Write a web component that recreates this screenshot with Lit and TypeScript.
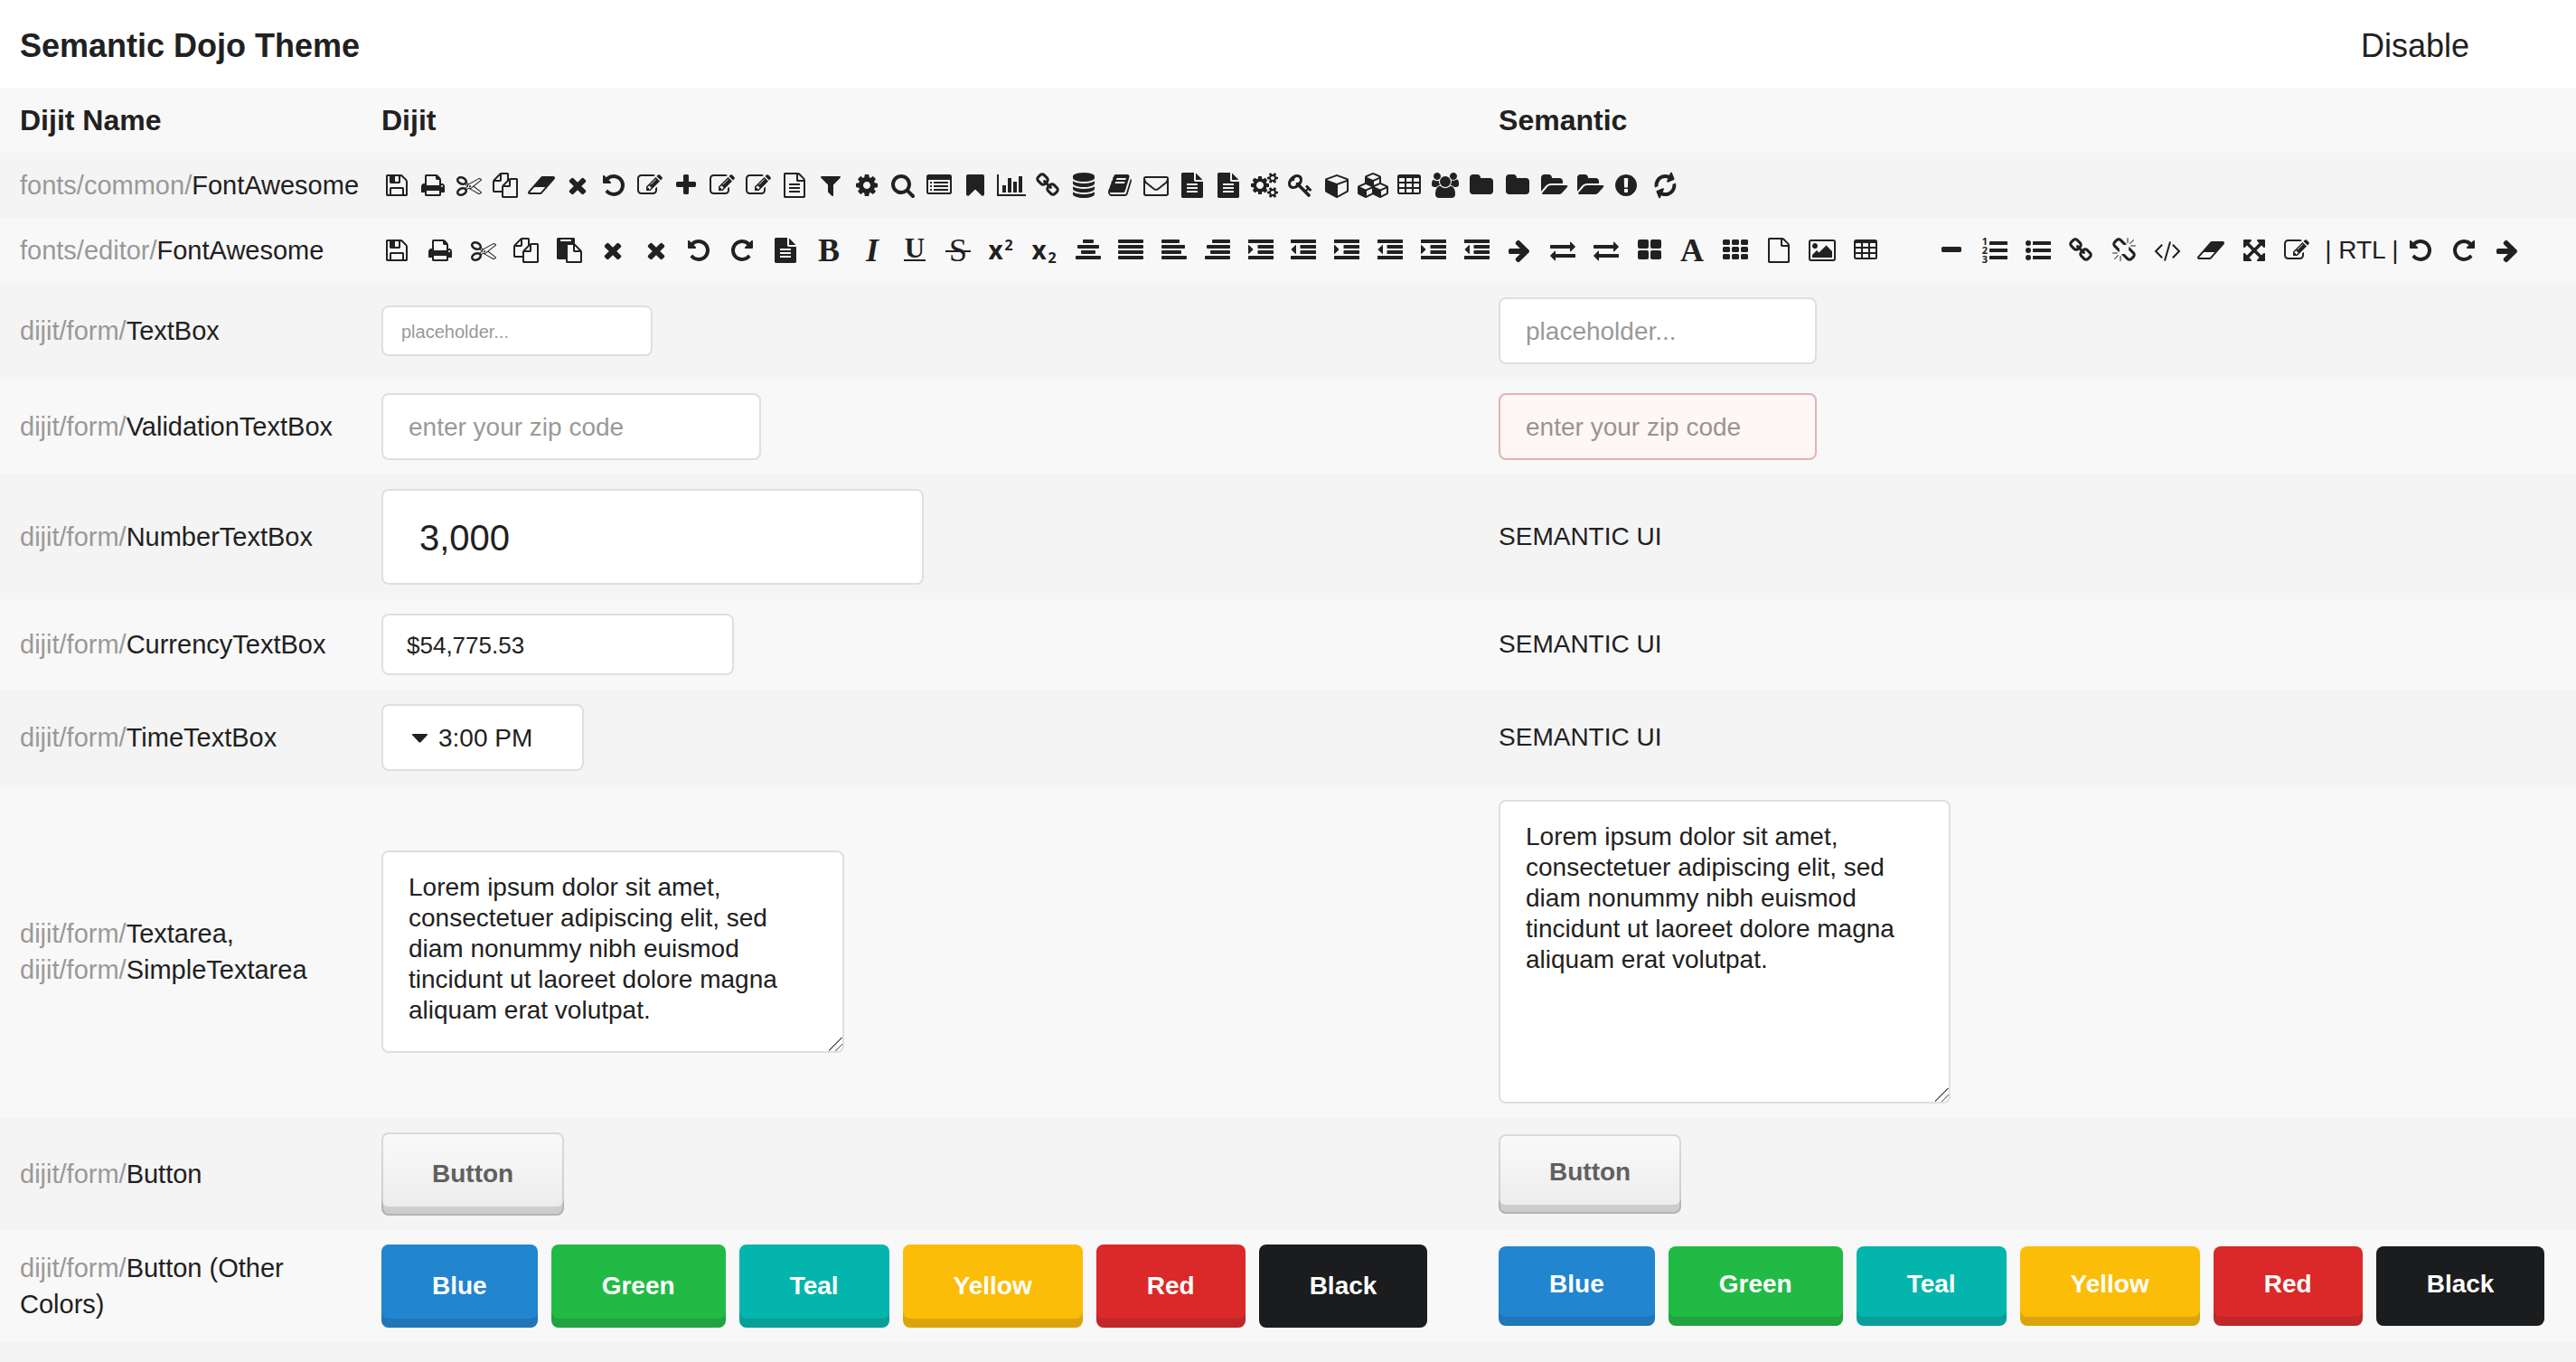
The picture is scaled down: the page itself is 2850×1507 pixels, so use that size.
import { LitElement, html, css, svg } from "lit";
import type { SVGTemplateResult, TemplateResult } from "lit";
import { customElement, property } from "lit/decorators.js";

/* Glyphs are drawn on a 1792-unit em square; wider glyphs carry their own width. */
interface Glyph {
  w?: number;
  body: SVGTemplateResult;
}

const EM = 1792;

const p = (d: string, w?: number): Glyph => ({ w, body: svg`<path fill-rule="evenodd" d=${d}></path>` });

/* Rounded rectangle as a path segment. */
const rr = (x: number, y: number, w: number, h: number, r: number): string =>
  `M${x + r} ${y}h${w - 2 * r}q${r} 0 ${r} ${r}v${h - 2 * r}q0 ${r} ${-r} ${r}h${2 * r - w}q${-r} 0 ${-r} ${-r}v${2 * r - h}q0 ${-r} ${r} ${-r}z`;

const circle = (cx: number, cy: number, r: number): string =>
  `M${cx - r} ${cy}a${r} ${r} 0 1 0 ${2 * r} 0a${r} ${r} 0 1 0 ${-2 * r} 0z`;

const lines = (spans: [number, number][], r = 64): string =>
  spans.map(([x, w], i) => rr(x, 128 + i * 384, w, 256, r)).join("");

const grid = (xs: number[], ys: number[], w: number, h: number, r: number): string =>
  ys.map((y) => xs.map((x) => rr(x, y, w, h, r)).join("")).join("");

const FILE_FRAME =
  "M1596 380q28 28 48 76t20 88v1152q0 40-28 68t-68 28h-1344q-40 0-68-28t-28-68v-1600q0-40 28-68t68-28h896q40 0 88 20t76 48zm-444-244v376h376q-10-29-22-41l-313-313q-12-12-41-22zm384 1528v-1024h-416q-40 0-68-28t-28-68v-416h-768v1536h1280z";

const DENT_LINES = rr(0, 128, 1792, 256, 32) + rr(672, 512, 1120, 256, 32) + rr(672, 896, 1120, 256, 32) + rr(0, 1280, 1792, 256, 32);
const LIST_LINES = rr(512, 256, 1280, 256, 32) + rr(512, 768, 1280, 256, 32) + rr(512, 1280, 1280, 256, 32);

const GLYPHS: Record<string, Glyph> = {
  save: p("M512 1536h768v-384h-768v384zm896 0h128v-896q0-14-10-38.5t-20-34.5l-281-281q-10-10-34-20t-39-10v416q0 40-28 68t-68 28h-576q-40 0-68-28t-28-68v-416h-128v1280h128v-416q0-40 28-68t68-28h832q40 0 68 28t28 68v416zm-384-928v-320q0-13-9.5-22.5t-22.5-9.5h-192q-13 0-22.5 9.5t-9.5 22.5v320q0 13 9.5 22.5t22.5 9.5h192q13 0 22.5-9.5t9.5-22.5zm640 32v928q0 40-28 68t-68 28h-1344q-40 0-68-28t-28-68v-1344q0-40 28-68t68-28h928q40 0 88 20t76 48l280 280q28 28 48 76t20 88z"),
  print: p("M448 1536h896v-256h-896v256zm0-640h896v-384h-160q-40 0-68-28t-28-68v-160h-640v640zm1152 64q0-26-19-45t-45-19-45 19-19 45 19 45 45 19 45-19 19-45zm128 0v416q0 13-9.5 22.5t-22.5 9.5h-224v160q0 40-28 68t-68 28h-960q-40 0-68-28t-28-68v-160h-224q-13 0-22.5-9.5t-9.5-22.5v-416q0-79 56.5-135.5t135.5-56.5h64v-544q0-40 28-68t68-28h672q40 0 88 20t76 48l152 152q28 28 48 76t20 88v256h64q79 0 135.5 56.5t56.5 135.5z"),
  cut: p("M960 896q26 0 45 19t19 45-19 45-45 19-45-19-19-45 19-45 45-19zm300 64l507 398q28 20 25 56-5 35-35 51l-128 64q-13 7-29 7-17 0-31-8l-690-387-110 66q-8 4-12 5 14 49 10 97-7 77-56 147.5t-132 123.5q-132 84-277 84-136 0-222-78-90-84-79-207 7-76 56-147t131-124q132-84 278-84 83 0 151 31 9-13 22-22l122-73-122-73q-13-9-22-22-68 31-151 31-146 0-278-84-82-53-131-124t-56-147q-5-59 15.5-113t63.5-93q85-79 222-79 145 0 277 84 83 52 132 123t56 148q4 48-10 97 4 1 12 5l110 66 690-387q14-8 31-8 16 0 29 7l128 64q30 16 35 51 3 36-25 56zm-681-260q46-42 21-108t-106-117q-92-59-192-59-74 0-113 36-46 42-21 108t106 117q92 59 192 59 74 0 113-36zm-85 745q81-51 106-117t-21-108q-39-36-113-36-100 0-192 59-81 51-106 117t21 108q39 36 113 36 100 0 192-59zm178-613l96 58v-11q0-36 33-56l14-8-79-47-26 26q-3 3-10 11t-12 12q-2 2-4 3.5t-3 2.5zm224 224l96 32 736-576-128-64-768 431v113l-160 96 9 8q2 2 7 6 4 4 11 12t11 12l26 26zm704 416l128-64-520-408-177 138q-2 3-13 7z"),
  copy: p("M1696 384q40 0 68 28t28 68v1216q0 40-28 68t-68 28h-960q-40 0-68-28t-28-68v-288h-544q-40 0-68-28t-28-68v-672q0-40 20-88t48-76l408-408q28-28 76-48t88-20h416q40 0 68 28t28 68v328q68-40 128-40h416zm-544 213l-299 299h299v-299zm-640-384l-299 299h299v-299zm196 647l316-316v-416h-384v416q0 40-28 68t-68 28h-416v640h512v-256q0-40 20-88t48-76zm956 804v-1152h-384v416q0 40-28 68t-68 28h-416v640h896z"),
  paste: p("M768 1664h896v-640h-416q-40 0-68-28t-28-68v-416h-384v1152zm256-1440v-64q0-13-9.5-22.5t-22.5-9.5h-704q-13 0-22.5 9.5t-9.5 22.5v64q0 13 9.5 22.5t22.5 9.5h704q13 0 22.5-9.5t9.5-22.5zm256 672h299l-299-299v299zm512 128v672q0 40-28 68t-68 28h-960q-40 0-68-28t-28-68v-160h-544q-40 0-68-28t-28-68v-1344q0-40 28-68t68-28h1088q40 0 68 28t28 68v328q21 13 36 28l408 408q28 28 48 76t20 88z"),
  eraser: p("M832 1408l336-384h-768l-336 384h768zm1013-1077q15 34 9.5 71.5t-30.5 65.5l-896 1024q-38 44-96 44h-768q-38 0-69.5-20.5t-47.5-54.5q-15-34-9.5-71.5t30.5-65.5l896-1024q38-44 96-44h768q38 0 69.5 20.5t47.5 54.5z", 1792),
  times: p("M1490 1322q0 40-28 68l-136 136q-28 28-68 28t-68-28l-294-294-294 294q-28 28-68 28t-68-28l-136-136q-28-28-28-68t28-68l294-294-294-294q-28-28-28-68t28-68l136-136q28-28 68-28t68 28l294 294 294-294q28-28 68-28t68 28l136 136q28 28 28 68t-28 68l-294 294 294 294q28 28 28 68z"),
  undo: p("M1664 896q0 156-61 298t-164 245-245 164-298 61q-172 0-327-72.5t-264-204.5q-7-10-6.5-22.5t8.5-20.5l137-138q10-9 25-9 16 2 23 12 73 95 179 147t225 52q104 0 198.5-40.5t163.5-109.5 109.5-163.5 40.5-198.5-40.5-198.5-109.5-163.5-163.5-109.5-198.5-40.5q-98 0-188 35.5t-160 101.5l137 138q31 30 14 69-17 40-59 40h-448q-26 0-45-19t-19-45v-448q0-42 40-59 39-17 69 14l130 129q107-101 244.5-156.5t284.5-55.5q156 0 298 61t245 164 164 245 61 298z"),
  redo: p("M1664 256v448q0 26-19 45t-45 19h-448q-42 0-59-40-17-39 14-69l138-138q-148-137-349-137-104 0-198.5 40.5t-163.5 109.5-109.5 163.5-40.5 198.5 40.5 198.5 109.5 163.5 163.5 109.5 198.5 40.5q119 0 225-52t179-147q7-10 23-12 15 0 25 9l137 138q9 8 9.5 20.5t-7.5 22.5q-109 132-264 204.5t-327 72.5q-156 0-298-61t-245-164-164-245-61-298 61-298 164-245 245-164 298-61q147 0 284.5 55.5t244.5 156.5l130-129q29-31 70-14 39 17 39 59z"),
  edit: p("M888 1184l116-116-152-152-116 116v56h96v96h56zm440-720q-16-16-33 1l-350 350q-17 17-1 33t33-1l350-350q17-17 1-33zm80 594v190q0 119-84.5 203.5t-203.5 84.5h-832q-119 0-203.5-84.5t-84.5-203.5v-832q0-119 84.5-203.5t203.5-84.5h832q63 0 117 25 15 7 18 23 3 17-9 29l-49 49q-14 14-32 8-23-6-45-6h-832q-66 0-113 47t-47 113v832q0 66 47 113t113 47h832q66 0 113-47t47-113v-126q0-13 9-22l64-64q15-15 35-7t20 29zm-96-738l288 288-672 672h-288v-288zm444 132l-92 92-288-288 92-92q28-28 68-28t68 28l152 152q28 28 28 68t-28 68z"),
  plus: p("M1600 736v192q0 40-28 68t-68 28h-416v416q0 40-28 68t-68 28h-192q-40 0-68-28t-28-68v-416h-416q-40 0-68-28t-28-68v-192q0-40 28-68t68-28h416v-416q0-40 28-68t68-28h192q40 0 68 28t28 68v416h416q40 0 68 28t28 68z"),
  minus: p("M1600 736v192q0 40-28 68t-68 28h-1216q-40 0-68-28t-28-68v-192q0-40 28-68t68-28h1216q40 0 68 28t28 68z"),
  fileOutline: p(FILE_FRAME),
  fileTextOutline: p(FILE_FRAME + rr(512, 768, 768, 128, 32) + rr(512, 1024, 768, 128, 32) + rr(512, 1280, 768, 128, 32)),
  fileText: p("M1596 476q14 14 28 36h-472v-472q22 14 36 28zm-476 164h544v1056q0 40-28 68t-68 28h-1344q-40 0-68-28t-28-68v-1600q0-40 28-68t68-28h800v544q0 40 28 68t68 28z" + rr(512, 768, 768, 128, 32) + rr(512, 1024, 768, 128, 32) + rr(512, 1280, 768, 128, 32)),
  filter: p("M1595 295q17 41-14 70l-493 493v742q0 42-39 59-13 5-25 5-27 0-45-19l-256-256q-19-19-19-45v-486l-493-493q-31-29-14-70 17-39 59-39h1280q42 0 59 39z"),
  cog: p("M1152 896q0-106-75-181t-181-75-181 75-75 181 75 181 181 75 181-75 75-181zm512-109v222q0 12-8 23t-20 13l-185 28q-19 54-39 91 35 50 107 138 10 12 10 25t-9 23q-27 37-99 108t-94 71q-12 0-26-9l-138-108q-44 23-91 38-16 136-29 186-7 28-36 28h-222q-14 0-24.5-8.5t-11.5-21.5l-28-184q-49-16-90-37l-141 107q-10 9-25 9-14 0-25-11-126-114-165-168-7-10-7-23 0-12 8-23 15-21 51-66.5t54-70.5q-27-50-41-99l-183-27q-13-2-21-12.5t-8-23.5v-222q0-12 8-23t19-13l186-28q14-46 39-92-40-57-107-138-10-12-10-24 0-10 9-23 26-36 98.5-107.5t94.5-71.5q13 0 26 10l138 107q44-23 91-38 16-136 29-186 7-28 36-28h222q14 0 24.5 8.5t11.5 21.5l28 184q49 16 90 37l142-107q9-9 24-9 13 0 25 10 129 119 165 170 7 8 7 22 0 12-8 23-15 21-51 66.5t-54 70.5q26 50 41 98l183 28q13 2 21 12.5t8 23.5z"),
  search: p("M1216 832q0-185-131.5-316.5t-316.5-131.5-316.5 131.5-131.5 316.5 131.5 316.5 316.5 131.5 316.5-131.5 131.5-316.5zm512 832q0 52-38 90t-90 38q-54 0-90-38l-343-342q-179 124-399 124-143 0-273.5-55.5t-225-150-150-225-55.5-273.5 55.5-273.5 150-225 225-150 273.5-55.5 273.5 55.5 225 150 150 225 55.5 273.5q0 220-124 399l343 343q37 37 37 90z"),
  listAlt: p(
    rr(0, 128, 1792, 1408, 160) + rr(128, 512, 1536, 896, 32) +
      grid([256], [640, 896, 1152], 128, 128, 32) + grid([512], [640, 896, 1152], 1024, 128, 32),
  ),
  bookmark: p("M1420 128q23 0 44 9 33 13 52.5 41t19.5 62v1289q0 34-19.5 62t-52.5 41q-19 8-44 8-48 0-83-32l-441-424-441 424q-36 33-83 33-23 0-44-9-33-13-52.5-41t-19.5-62v-1289q0-34 19.5-62t52.5-41q21-9 44-9h1048z"),
  chart: p("M640 896v512h-256v-512h256zm384-512v1024h-256v-1024h256zm1024 1152v128h-2048v-1536h128v1408h1920zm-640-896v768h-256v-768h256zm384-384v1152h-256v-1152h256z", 2048),
  link: p("M1520 1216q0-40-28-68l-208-208q-28-28-68-28-42 0-72 32 3 3 19 18.5t21.5 21.5 15 19 13 25.5 3.5 27.5q0 40-28 68t-68 28q-15 0-27.5-3.5t-25.5-13-19-15-21.5-21.5-18.5-19q-33 31-33 73 0 40 28 68l206 207q27 27 68 27 40 0 68-26l147-146q28-28 28-67zm-703-705q0-40-28-68l-206-207q-28-28-68-28-39 0-68 27l-147 146q-28 28-28 67 0 40 28 68l208 208q27 27 68 27 42 0 72-31-3-3-19-18.5t-21.5-21.5-15-19-13-25.5-3.5-27.5q0-40 28-68t68-28q15 0 27.5 3.5t25.5 13 19 15 21.5 21.5 18.5 19q33-31 33-73zm895 705q0 120-85 203l-147 146q-83 83-203 83-121 0-204-85l-206-207q-83-83-83-203 0-123 88-209l-88-88q-86 88-208 88-120 0-204-84l-208-208q-84-84-84-204t85-203l147-146q83-83 203-83 121 0 204 85l206 207q83 83 83 203 0 123-88 209l88 88q86-88 208-88 120 0 204 84l208 208q84 84 84 204z"),
  unlink: p("M503 1271l-256 256q-10 9-23 9-12 0-23-9-9-10-9-23t9-23l256-256q10-9 23-9t23 9q9 10 9 23t-9 23zm169 41v320q0 14-9 23t-23 9-23-9-9-23v-320q0-14 9-23t23-9 23 9 9 23zm-224-224q0 14-9 23t-23 9h-320q-14 0-23-9t-9-23 9-23 23-9h320q14 0 23 9t9 23zm1264 128q0 120-85 203l-147 146q-83 83-203 83-121 0-204-85l-334-335q-21-21-42-56l239-18 273 274q28 28 68 27.5t68-27.5l147-146q28-28 28-67 0-40-28-68l-274-275 18-239q35 21 56 42l336 336q84 86 84 204zm-617-724l-239 18-273-274q-28-28-68-28-39 0-68 27l-147 146q-28 28-28 67 0 40 28 68l274 274-18 240q-35-21-56-42l-336-336q-84-86-84-204 0-120 85-203l147-146q83-83 203-83 121 0 204 85l334 335q21 21 42 56zm633 84q0 14-9 23t-23 9h-320q-14 0-23-9t-9-23 9-23 23-9h320q14 0 23 9t9 23zm-544-544v320q0 14-9 23t-23 9-23-9-9-23v-320q0-14 9-23t23-9 23 9 9 23zm407 151l-256 256q-11 9-23 9t-23-9q-9-10-9-23t9-23l256-256q10-9 23-9t23 9q9 10 9 23t-9 23z"),
  database: p("M896 768q237 0 443-43t325-127v170q0 69-103 128t-280 93.5-385 34.5-385-34.5-280-93.5-103-128v-170q119 84 325 127t443 43zm0 768q237 0 443-43t325-127v170q0 69-103 128t-280 93.5-385 34.5-385-34.5-280-93.5-103-128v-170q119 84 325 127t443 43zm0-384q237 0 443-43t325-127v170q0 69-103 128t-280 93.5-385 34.5-385-34.5-280-93.5-103-128v-170q119 84 325 127t443 43zm0-1152q208 0 385 34.5t280 93.5 103 128v128q0 69-103 128t-280 93.5-385 34.5-385-34.5-280-93.5-103-128v-128q0-69 103-128t280-93.5 385-34.5z"),
  book: p("M1703 478q40 57 18 129l-275 906q-19 64-76.5 107.5t-122.5 43.5h-923q-77 0-148.5-53.5t-99.5-131.5q-24-67-2-127 0-4 3-27t4-37q1-8-3-21.5t-3-19.5q2-11 8-21t16.5-23.5 16.5-23.5q23-38 45-91.5t30-91.5q3-10 .5-30t-.5-28q3-11 17-28t17-23q21-36 42-92t25-90q1-9-2.5-32t.5-28q4-13 22-30.5t22-22.5q19-26 42.5-84.5t27.5-96.5q1-8-3-25.5t-2-26.5q2-8 9-18t18-23 17-21q8-12 16.5-30.5t15-35 16-36 19.5-32 26.5-23.5 36-11.5 47.5 5.5l-1 3q38-9 51-9h761q74 0 114 56t18 130l-274 906q-36 119-71.5 153.5t-128.5 34.5h-869q-27 0-38 15-11 16-1 43 24 70 144 70h923q29 0 56-15.5t35-41.5l300-987q7-22 5-57 38 15 59 43zm-1064 2q-4 13 2 22.5t20 9.5h608q13 0 25.5-9.5t16.5-22.5l21-64q4-13-2-22.5t-20-9.5h-608q-13 0-25.5 9.5t-16.5 22.5zm-83 256q-4 13 2 22.5t20 9.5h608q13 0 25.5-9.5t16.5-22.5l21-64q4-13-2-22.5t-20-9.5h-608q-13 0-25.5 9.5t-16.5 22.5z"),
  envelope: p("M1664 1504v-768q-32 36-69 66-268 206-426 338-51 43-83 67t-86.5 48.5-102.5 24.5h-2q-48 0-102.5-24.5t-86.5-48.5-83-67q-158-132-426-338-37-30-69-66v768q0 13 9.5 22.5t22.5 9.5h1472q13 0 22.5-9.5t9.5-22.5zm0-1051v-24.5l-.5-13-3-12.5-5.5-9-9-7.5-14-2.5h-1472q-13 0-22.5 9.5t-9.5 22.5q0 168 147 284 193 152 401 317 6 5 35 29.5t46 37.5 44.5 31.5 50.5 27.5 43 9h2q20 0 43-9t50.5-27.5 44.5-31.5 46-37.5 35-29.5q208-165 401-317 54-43 100.5-115.5t46.5-131.5zm128-37v1088q0 66-47 113t-113 47h-1472q-66 0-113-47t-47-113v-1088q0-66 47-113t113-47h1472q66 0 113 47t47 113z"),
  cogs: p("M832 896q0-106-75-181t-181-75-181 75-75 181 75 181 181 75 181-75 75-181zm768 512q0-52-38-90t-90-38-90 38-38 90q0 53 37.5 90.5t90.5 37.5 90.5-37.5 37.5-90.5zm0-1024q0-52-38-90t-90-38-90 38-38 90q0 53 37.5 90.5t90.5 37.5 90.5-37.5 37.5-90.5zm-384 421v185q0 10-7 19.5t-16 10.5l-155 24q-11 35-32 76 34 48 90 115 7 11 7 20 0 12-7 19-23 30-82.5 89.5t-78.5 59.5q-11 0-21-7l-115-90q-37 19-77 31-11 108-23 155-7 24-30 24h-186q-11 0-20-7.5t-10-17.5l-23-153q-34-10-75-31l-118 89q-7 7-20 7-11 0-21-8-144-133-144-160 0-9 7-19 10-14 41-53t47-61q-23-44-35-82l-152-24q-10-1-17-9.5t-7-19.5v-185q0-10 7-19.5t16-10.5l155-24q11-35 32-76-34-48-90-115-7-11-7-20 0-12 7-20 22-30 82-89t79-59q11 0 21 7l115 90q34-18 77-32 11-108 23-154 7-24 30-24h186q11 0 20 7.5t10 17.5l23 153q34 10 75 31l118-89q8-7 20-7 11 0 21 8 144 133 144 160 0 8-7 19-12 16-42 54t-45 60q23 48 34 82l152 23q10 2 17 10.5t7 19.5zm640 533v140q0 16-149 31-12 27-30 52 51 113 51 138 0 4-4 7-122 71-124 71-8 0-46-47t-52-68q-20 2-30 2t-30-2q-14 21-52 68t-46 47q-2 0-124-71-4-3-4-7 0-25 51-138-18-25-30-52-149-15-149-31v-140q0-16 149-31 13-29 30-52-51-113-51-138 0-4 4-7 4-2 35-20t59-34 30-16q8 0 46 46.5t52 67.5q20-2 30-2t30 2q51-71 92-112l6-2q4 0 124 70 4 3 4 7 0 25-51 138 17 23 30 52 149 15 149 31zm0-1024v140q0 16-149 31-12 27-30 52 51 113 51 138 0 4-4 7-122 71-124 71-8 0-46-47t-52-68q-20 2-30 2t-30-2q-14 21-52 68t-46 47q-2 0-124-71-4-3-4-7 0-25 51-138-18-25-30-52-149-15-149-31v-140q0-16 149-31 13-29 30-52-51-113-51-138 0-4 4-7 4-2 35-20t59-34 30-16q8 0 46 46.5t52 67.5q20-2 30-2t30 2q51-71 92-112l6-2q4 0 124 70 4 3 4 7 0 25-51 138 17 23 30 52 149 15 149 31z", 1856),
  key: p("M832 512q0-80-56-136t-136-56-136 56-56 136q0 42 19 83-41-19-83-19-80 0-136 56t-56 136 56 136 136 56 136-56 56-136q0-42-19-83 41 19 83 19 80 0 136-56t56-136zm851 704q0 17-49 66t-66 49q-9 0-28.5-16t-36.5-33-38.5-40-24.5-26l-96 96 220 220q28 28 28 68 0 42-39 81t-81 39q-40 0-68-28l-671-671q-176 131-365 131-163 0-265.5-102.5t-102.5-265.5q0-160 95-313t248-248 313-95q163 0 265.5 102.5t102.5 265.5q0 189-131 365l355 355 96-96q-3-3-26-24.5t-40-38.5-33-36.5-16-28.5q0-17 49-66t66-49q13 0 23 10 6 6 46 44.5t82 79.5 86.5 86 73 78 28.5 41z"),
  cube: p("M896 1629l640-349v-636l-640 233v752zm-64-865l698-254-698-254-698 254zm832-252v768q0 35-18 65t-49 47l-704 384q-28 16-61 16t-61-16l-704-384q-31-17-49-47t-18-65v-768q0-40 23-73t61-47l704-256q22-8 44-8t44 8l704 256q38 14 61 47t23 73z", 1664),
  cubes: p("M640 1632l384-192v-314l-384 164v342zm-64-454l404-173-404-173-404 173zm1088 454l384-192v-314l-384 164v342zm-64-454l404-173-404-173-404 173zm-448-293l384-165v-266l-384 164v267zm-64-379l441-189-441-189-441 189zm1088 518v416q0 36-19 67t-52 47l-448 224q-25 14-57 14t-57-14l-448-224q-4-2-7-4-2 2-7 4l-448 224q-25 14-57 14t-57-14l-448-224q-33-16-52-47t-19-67v-416q0-38 21.5-70t56.5-48l434-186v-400q0-38 21.5-70t56.5-48l448-192q23-10 50-10t50 10l448 192q35 16 56.5 48t21.5 70v400l434 186q36 16 57 48t21 70z", 2176),
  table: p(rr(64, 128, 1664, 1408, 160) + grid([192, 704, 1216], [384, 768, 1152], 384, 256, 32)),
  users: p("M593 896q-162 5-265 128h-134q-82 0-138-40.5t-56-118.5q0-353 124-353 6 0 43.5 21t97.5 42.5 119 21.5q67 0 133-23-5 37-5 66 0 159 81 288zm1071 637q0 120-73 189.5t-194 69.5h-874q-121 0-194-69.5t-73-189.5q0-53 3.5-103.5t14-109 26.5-108.5 43-97.5 62-81 85.5-53.5 111.5-20q10 0 43 21.5t73 48 107 48 135 21.5 135-21.5 107-48 73-48 43-21.5q61 0 111.5 20t85.5 53.5 62 81 43 97.5 26.5 108.5 14 109 3.5 103.5zm-1024-1277q0 106-75 181t-181 75-181-75-75-181 75-181 181-75 181 75 75 181zm704 384q0 159-112.5 271.5t-271.5 112.5-271.5-112.5-112.5-271.5 112.5-271.5 271.5-112.5 271.5 112.5 112.5 271.5zm576 225q0 78-56 118.5t-138 40.5h-134q-103-123-265-128 81-129 81-288 0-29-5-66 66 23 133 23 59 0 119-21.5t97.5-42.5 43.5-21q124 0 124 353zm-128-609q0 106-75 181t-181 75-181-75-75-181 75-181 181-75 181 75 75 181z", 1920),
  folder: p("M1728 608v704q0 92-66 158t-158 66h-1216q-92 0-158-66t-66-158v-960q0-92 66-158t158-66h320q92 0 158 66t66 158v32h672q92 0 158 66t66 158z"),
  folderOpen: p("M1879 952q0 31-31 66l-336 396q-43 51-120.5 86.5t-143.5 35.5h-1088q-34 0-60.5-13t-26.5-43q0-31 31-66l336-396q43-51 120.5-86.5t143.5-35.5h1088q34 0 60.5 13t26.5 43zm-343-344v160h-832q-94 0-197 47.5t-164 119.5l-337 396-5 6q0-4-.5-12.5t-.5-12.5v-960q0-92 66-158t158-66h320q92 0 158 66t66 158v32h544q92 0 158 66t66 158z", 1856),
  alert: p("M896 128q209 0 385.5 103t279.5 279.5 103 385.5-103 385.5-279.5 279.5-385.5 103-385.5-103-279.5-279.5-103-385.5 103-385.5 279.5-279.5 385.5-103zm128 1247v-190q0-14-9-23.5t-22-9.5h-192q-13 0-23 10t-10 23v190q0 13 10 23t23 10h192q13 0 22-9.5t9-23.5zm-2-344l18-621q0-12-10-18-10-8-24-8h-220q-14 0-24 8-10 6-10 18l17 621q0 10 10 17.5t24 7.5h185q14 0 23.5-7.5t10.5-17.5z"),
  refresh: {
    body: svg`<g transform="translate(224 0) rotate(-22 896 896)"><path d="M1639 1056q0 5-1 7-64 268-268 434.5t-478 166.5q-146 0-282.5-55t-243.5-157l-129 129q-19 19-45 19t-45-19-19-45v-448q0-26 19-45t45-19h448q26 0 45 19t19 45-19 45l-137 137q71 66 161 102t187 36q134 0 250-65t186-179q11-17 53-117 8-23 30-23h192q13 0 22.5 9.5t9.5 22.5zm25-800v448q0 26-19 45t-45 19h-448q-26 0-45-19t-19-45 19-45l138-138q-148-137-349-137-134 0-250 65t-186 179q-11 17-53 117-8 23-30 23h-199q-13 0-22.5-9.5t-9.5-22.5v-7q65-268 270-434.5t480-166.5q146 0 284 55.5t245 156.5l130-129q19-19 45-19t45 19 19 45z"></path></g>`,
  },
  alignCenter: p(lines([[512, 768], [128, 1536], [384, 1024], [0, 1792]])),
  alignJustify: p(lines([[0, 1792], [0, 1792], [0, 1792], [0, 1792]])),
  alignLeft: p(lines([[0, 1280], [0, 1664], [0, 1408], [0, 1792]])),
  alignRight: p(lines([[512, 1280], [128, 1664], [384, 1408], [0, 1792]])),
  indent: p("M352 832q0 14-9 23l-288 288q-9 9-23 9-13 0-22.5-9.5t-9.5-22.5v-576q0-13 9.5-22.5t22.5-9.5q14 0 23 9l288 288q9 9 9 23z" + DENT_LINES),
  outdent: p("M384 544v576q0 13-9.5 22.5t-22.5 9.5q-14 0-23-9l-288-288q-9-9-9-23t9-23l288-288q9-9 23-9 13 0 22.5 9.5t9.5 22.5z" + DENT_LINES),
  arrowRight: p("M1600 960q0 54-37 91l-651 651q-39 37-91 37-51 0-90-37l-75-75q-38-38-38-91t38-91l293-293h-704q-52 0-84.5-37.5t-32.5-90.5v-128q0-53 32.5-90.5t84.5-37.5h704l-293-294q-38-36-38-90t38-90l75-75q38-38 90-38 53 0 91 38l651 651q37 35 37 90z"),
  exchange: p("M1792 1184v192q0 13-9.5 22.5t-22.5 9.5h-1376v192q0 13-9.5 22.5t-22.5 9.5q-12 0-24-10l-319-320q-9-9-9-22 0-14 9-23l320-320q9-9 23-9 13 0 22.5 9.5t9.5 22.5v192h1376q13 0 22.5 9.5t9.5 22.5zm0-544q0 14-9 23l-320 320q-9 9-23 9-13 0-22.5-9.5t-9.5-22.5v-192h-1376q-13 0-22.5-9.5t-9.5-22.5v-192q0-13 9.5-22.5t22.5-9.5h1376v-192q0-14 9-23t23-9q12 0 24 10l319 319q9 9 9 23z"),
  thLarge: p(grid([64, 960], [128, 896], 768, 640, 128)),
  th: p(grid([0, 640, 1280], [128, 640, 1152], 512, 384, 96)),
  picture: p("M640 576q0 80-56 136t-136 56-136-56-56-136 56-136 136-56 136 56 56 136zm1024 384v448h-1408v-192l320-320 160 160 512-512zm96-704h-1600q-13 0-22.5 9.5t-9.5 22.5v1216q0 13 9.5 22.5t22.5 9.5h1600q13 0 22.5-9.5t9.5-22.5v-1216q0-13-9.5-22.5t-22.5-9.5zm160 32v1216q0 66-47 113t-113 47h-1600q-66 0-113-47t-47-113v-1216q0-66 47-113t113-47h1600q66 0 113 47t47 113z", 1920),
  listBullets: p(circle(192, 384, 192) + circle(192, 896, 192) + circle(192, 1408, 192) + LIST_LINES),
  code: p("M553 1399l-50 50q-10 10-23 10t-23-10l-466-466q-10-10-10-23t10-23l466-466q10-10 23-10t23 10l50 50q10 10 10 23t-10 23l-393 393 393 393q10 10 10 23t-10 23zm591-1067l-373 1291q-4 13-15.5 19.5t-23.5 2.5l-62-17q-13-4-19.5-15.5t-2.5-24.5l373-1291q4-13 15.5-19.5t23.5-2.5l62 17q13 4 19.5 15.5t2.5 24.5zm657 651l-466 466q-10 10-23 10t-23-10l-50-50q-10-10-10-23t10-23l393-393-393-393q-10-10-10-23t10-23l50-50q10-10 23-10t23 10l466 466q10 10 10 23t-10 23z"),
  expand: p("M1411 541l-355 355 355 355 144-144q29-31 70-14 39 17 39 59v448q0 26-19 45t-45 19h-448q-42 0-59-40-17-39 14-69l144-144-355-355-355 355 144 144q31 30 14 69-17 40-59 40h-448q-26 0-45-19t-19-45v-448q0-42 40-59 39-17 69 14l144 144 355-355-355-355-144 144q-19 19-45 19-12 0-24-5-40-17-40-59v-448q0-26 19-45t45-19h448q42 0 59 40 17 39-14 69l-144 144 355 355 355-355-144-144q-31-30-14-69 17-40 59-40h448q26 0 45 19t19 45v448q0 42-39 59-13 5-25 5-26 0-45-19z"),
  bold: { body: svg`<text class="serif" x="896" y="1664" font-size="2304" font-weight="700">B</text>` },
  italic: { body: svg`<text class="serif" x="896" y="1664" font-size="2304" font-weight="700" font-style="italic">I</text>` },
  underline: {
    body: svg`<text class="serif" x="896" y="1408" font-size="1984" font-weight="700">U</text><path d="M128 1536h1536v128h-1536z"></path>`,
  },
  strike: {
    body: svg`<text class="serif" x="896" y="1664" font-size="2304">S</text><path d="M0 896h1792v128h-1792z"></path>`,
  },
  superscript: {
    body: svg`<text class="sans" x="480" y="1536" font-size="1792">x</text><text class="sans" x="1408" y="896" font-size="1024">2</text>`,
  },
  subscript: {
    body: svg`<text class="sans" x="480" y="1536" font-size="1792">x</text><text class="sans" x="1408" y="1792" font-size="1024">2</text>`,
  },
  font: { body: svg`<text class="serif" x="896" y="1664" font-size="2304" font-weight="700">A</text>` },
  listNumbers: {
    body: svg`<text class="sans" x="192" y="512" font-size="704">1</text><text class="sans" x="192" y="1152" font-size="704">2</text><text class="sans" x="192" y="1792" font-size="704">3</text><path d=${LIST_LINES}></path>`,
  },
  blank: { body: svg`` },
};

@customElement("glyph-icon")
export class GlyphIcon extends LitElement {
  @property() name = "blank";

  static styles = css`
    :host {
      display: inline-flex;
      justify-content: center;
      width: 34px;
      height: 28px;
      margin-right: 6px;
      vertical-align: -5px;
    }
    .glyph {
      display: block;
      flex: none;
      height: 28px;
      overflow: visible;
      fill: currentColor;
    }
    .serif {
      font-family: "Liberation Serif", serif;
      text-anchor: middle;
    }
    .sans {
      font-family: "Open Sans", sans-serif;
      font-weight: 700;
      text-anchor: middle;
    }
  `;

  render() {
    const glyph = GLYPHS[this.name] ?? GLYPHS.blank;
    const w = glyph.w ?? EM;
    return html`<svg class="glyph" width=${w / 64} viewBox="0 0 ${w} 1792" aria-hidden="true">${glyph.body}</svg>`;
  }
}

const COMMON_ICONS = [
  "save", "print", "cut", "copy", "eraser", "times", "undo", "edit", "plus", "edit", "edit", "fileTextOutline",
  "filter", "cog", "search", "listAlt", "bookmark", "chart", "link", "database", "book", "envelope", "fileText",
  "fileText", "cogs", "key", "cube", "cubes", "table", "users", "folder", "folder", "folderOpen", "folderOpen",
  "alert", "refresh",
];

const EDITOR_ICONS = [
  "save", "print", "cut", "copy", "paste", "times", "times", "undo", "redo", "fileText", "bold", "italic",
  "underline", "strike", "superscript", "subscript", "alignCenter", "alignJustify", "alignLeft", "alignRight",
  "indent", "outdent", "indent", "outdent", "indent", "outdent", "arrowRight", "exchange", "exchange", "thLarge",
  "font", "th", "fileOutline", "picture", "table", "blank", "minus", "listNumbers", "listBullets", "link", "unlink",
  "code", "eraser", "expand", "edit",
];

const DIRECTION_ICONS = ["undo", "redo", "arrowRight"];

const COLORS = ["Blue", "Green", "Teal", "Yellow", "Red", "Black"];

const LOREM =
  "Lorem ipsum dolor sit amet, consectetuer adipiscing elit, sed diam nonummy nibh euismod tincidunt ut laoreet dolore magna aliquam erat volutpat.";

@customElement("app-root")
export class AppRoot extends LitElement {
  static styles = css`
    :host {
      display: block;
      min-height: 100vh;
      background: #f4f4f4;
      color: #212121;
      font-family: "Liberation Sans", Arial, Helvetica, sans-serif;
      font-size: 28px;
      line-height: 40px;
    }
    * {
      box-sizing: border-box;
    }
    .header {
      display: flex;
      justify-content: space-between;
      align-items: center;
      padding: 30px 118px 26px 22px;
      background: #fff;
      line-height: 41px;
    }
    .title {
      margin: 0;
      font-size: 36px;
      font-weight: 700;
    }
    .toggle {
      padding: 0;
      border: 0;
      background: none;
      color: inherit;
      font: inherit;
      font-size: 36px;
      cursor: pointer;
    }
    .catalog {
      width: 100%;
      table-layout: fixed;
      border-collapse: collapse;
    }
    .name-col {
      width: 400px;
    }
    .dijit-col {
      width: 43.37%;
    }
    .row {
      background: #f8f8f8;
    }
    .body .row:nth-child(odd) {
      background: #f4f4f4;
    }
    .head,
    .name,
    .cell {
      padding: 16px 0 16px 22px;
      text-align: left;
      vertical-align: middle;
      font-weight: 400;
    }
    .head {
      font-size: 32px;
      font-weight: 700;
    }
    .name {
      font-size: 29px;
    }
    .path {
      color: #999;
    }
    .icons {
      white-space: nowrap;
    }
    .field,
    .area,
    .combo {
      display: block;
      max-width: 100%;
      margin: 0;
      border: 2px solid #dedfdf;
      border-radius: 8px;
      background: #fff;
      color: inherit;
      font: inherit;
      line-height: 34px;
    }
    .field {
      height: 74px;
      padding: 2px 28px 0;
    }
    .field::placeholder {
      color: #999;
      opacity: 1;
    }
    .field.invalid {
      border-color: #e0b4b4;
      background: #fff6f6;
    }
    .field.invalid::placeholder {
      color: #999393;
    }
    .field.small {
      width: 300px;
      height: 56px;
      padding: 2px 20px 0;
      font-size: 20px;
    }
    .field.zip {
      width: 420px;
    }
    .field.semantic {
      width: 352px;
    }
    .field.huge {
      width: 600px;
      height: 106px;
      padding: 2px 40px 0;
      font-size: 40px;
    }
    .field.money {
      width: 390px;
      height: 68px;
      padding: 2px 26px 0;
      font-size: 26px;
    }
    .combo {
      display: flex;
      align-items: center;
      gap: 12px;
      width: 224px;
      height: 74px;
      padding: 2px 16px 0 32px;
    }
    .caret {
      flex: none;
      width: 17px;
      height: 10px;
      padding: 0;
      border: 0;
      background: none;
      color: inherit;
      line-height: 0;
    }
    .caret-shape {
      display: block;
      fill: currentColor;
    }
    .combo-input {
      flex: 1;
      min-width: 0;
      padding: 0;
      border: 0;
      outline: 0;
      background: none;
      color: inherit;
      font: inherit;
    }
    .area {
      width: 512px;
      height: 224px;
      padding: 22px 28px;
      overflow: hidden;
      resize: both;
    }
    .area::-webkit-resizer {
      background: linear-gradient(
        135deg,
        transparent 45%,
        #666 46%,
        #666 51%,
        transparent 52%,
        transparent 70%,
        #666 71%,
        #666 76%,
        transparent 77%
      );
    }
    .area.tall {
      width: 500px;
      height: 336px;
    }
    .buttons {
      display: flex;
      gap: 15px;
    }
    .button {
      display: block;
      padding: 26px 56px;
      border: 0;
      border-radius: 8px;
      background: #dedede;
      box-shadow: inset 0 -10px 0 rgba(34, 36, 38, 0.15);
      color: #fff;
      font: inherit;
      font-weight: 700;
      line-height: 40px;
      cursor: pointer;
    }
    .button.semantic {
      padding: 22px 56px 26px;
    }
    .button.plain {
      background: linear-gradient(#fafafa, #ebebeb);
      box-shadow:
        inset 0 0 0 2px rgba(34, 36, 38, 0.15),
        inset 0 -10px 0 rgba(34, 36, 38, 0.15);
      color: #606060;
    }
    .button.blue {
      background: #2185d0;
    }
    .button.green {
      background: #21ba45;
    }
    .button.teal {
      background: #04b5ad;
    }
    .button.yellow {
      background: #fbbd08;
    }
    .button.red {
      background: #db2828;
    }
    .button.black {
      background: #1b1c1d;
    }
  `;

  private name(widget: string, forId?: string): TemplateResult {
    return forId
      ? html`<label for=${forId}><span class="path">dijit/form/</span>${widget}</label>`
      : html`<span class="path">dijit/form/</span>${widget}`;
  }

  private row(name: TemplateResult, dijit: TemplateResult, semantic: TemplateResult | string): TemplateResult {
    return html`<tr class="row">
      <th class="name" scope="row">${name}</th>
      <td class="cell">${dijit}</td>
      <td class="cell">${semantic}</td>
    </tr>`;
  }

  private colorButtons(variant: string): TemplateResult {
    return html`<div class="buttons">
      ${COLORS.map((c) => html`<button type="button" class="button ${c.toLowerCase()} ${variant}">${c}</button>`)}
    </div>`;
  }

  render() {
    return html`
      <header class="header">
        <h1 class="title">Semantic Dojo Theme</h1>
        <button type="button" class="toggle">Disable</button>
      </header>
      <table class="catalog">
        <colgroup>
          <col class="name-col" />
          <col class="dijit-col" />
          <col />
        </colgroup>
        <thead>
          <tr class="row">
            <th class="head" scope="col">Dijit Name</th>
            <th class="head" scope="col">Dijit</th>
            <th class="head" scope="col">Semantic</th>
          </tr>
        </thead>
        <tbody class="body">
          <tr class="row">
            <th class="name" scope="row"><span class="path">fonts/common/</span>FontAwesome</th>
            <td class="cell icons" colspan="2">
              ${COMMON_ICONS.map((n) => html`<glyph-icon name=${n}></glyph-icon>`)}
            </td>
          </tr>
          <tr class="row">
            <th class="name" scope="row"><span class="path">fonts/editor/</span>FontAwesome</th>
            <td class="cell icons" colspan="2">
              ${EDITOR_ICONS.map((n) => html`<glyph-icon name=${n}></glyph-icon> `)}
              <span>| RTL |</span>
              ${DIRECTION_ICONS.map((n) => html`<glyph-icon name=${n}></glyph-icon> `)}
            </td>
          </tr>
          ${this.row(
            this.name("TextBox", "text"),
            html`<input id="text" class="field small" type="text" placeholder="placeholder..." />`,
            html`<input class="field semantic" type="text" placeholder="placeholder..." aria-label="TextBox" />`,
          )}
          ${this.row(
            this.name("ValidationTextBox", "zip"),
            html`<input id="zip" class="field zip" type="text" placeholder="enter your zip code" />`,
            html`<input
              class="field semantic invalid"
              type="text"
              placeholder="enter your zip code"
              aria-label="ValidationTextBox"
              aria-invalid="true"
            />`,
          )}
          ${this.row(
            this.name("NumberTextBox", "number"),
            html`<input id="number" class="field huge" type="text" inputmode="numeric" .value=${"3,000"} />`,
            "SEMANTIC UI",
          )}
          ${this.row(
            this.name("CurrencyTextBox", "money"),
            html`<input id="money" class="field money" type="text" inputmode="decimal" .value=${"$54,775.53"} />`,
            "SEMANTIC UI",
          )}
          ${this.row(
            this.name("TimeTextBox", "time"),
            html`<div class="combo">
              <button type="button" class="caret" aria-label="Choose a time">
                <svg class="caret-shape" width="17" height="10" viewBox="0 0 17 10" aria-hidden="true">
                  <path d="M1 0h15q2 0 .7 1.6l-7 7.4q-1.2 1.2-2.4 0l-7-7.4q-1.3-1.6 .7-1.6z"></path>
                </svg>
              </button>
              <input id="time" class="combo-input" type="text" .value=${"3:00 PM"} />
            </div>`,
            "SEMANTIC UI",
          )}
          ${this.row(
            html`<label for="area"><span class="path">dijit/form/</span>Textarea,<br /><span class="path">dijit/form/</span>SimpleTextarea</label>`,
            html`<textarea id="area" class="area" .value=${LOREM}></textarea>`,
            html`<textarea class="area tall" aria-label="Textarea" .value=${LOREM}></textarea>`,
          )}
          ${this.row(
            this.name("Button"),
            html`<button type="button" class="button plain">Button</button>`,
            html`<button type="button" class="button plain semantic">Button</button>`,
          )}
          ${this.row(this.name("Button (Other Colors)"), this.colorButtons(""), this.colorButtons("semantic"))}
        </tbody>
      </table>
    `;
  }
}
